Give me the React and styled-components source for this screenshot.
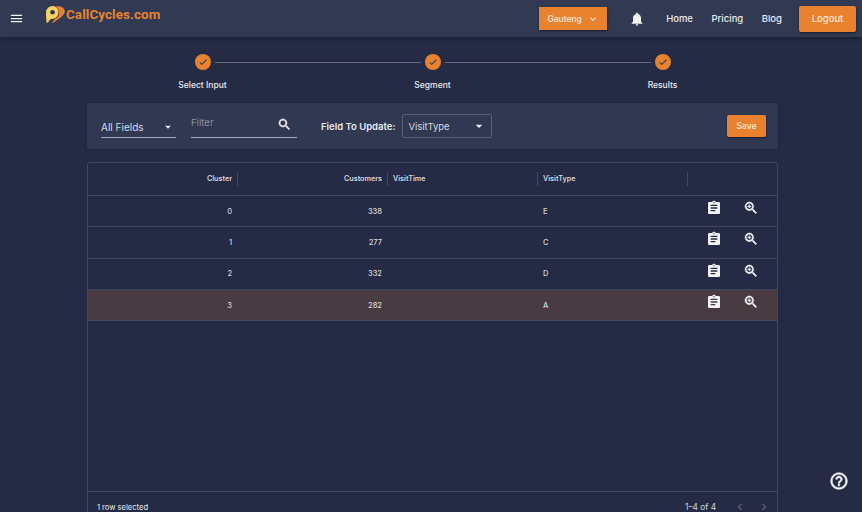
import React from 'react';
import styled, { createGlobalStyle } from 'styled-components';

const GlobalStyle = createGlobalStyle`
    html, body {
        margin: 0;
        height: 512px;
        overflow: hidden;
        background: #252b45;
        font-family: Inter, "Liberation Sans", sans-serif;
        color: #e8e9ee;
    }
    * {
        box-sizing: border-box;
    }
`;

const Page = styled.div`
    height: 512px;
    overflow: hidden;
`;

const Header = styled.header`
    height: 37px;
    display: flex;
    align-items: center;
    padding: 0 6px 0 9px;
    background: #313953;
    box-shadow: 0 2px 4px rgba(0, 0, 0, 0.25);
`;

const Brand = styled.div`
    display: flex;
    align-items: center;
    margin-left: 21px;
    margin-top: -8px;
`;

const BrandName = styled.span`
    font-family: Roboto, sans-serif;
    font-size: 13.4px;
    font-weight: 700;
    color: #e8822f;
    letter-spacing: 0.1px;
`;

const Spacer = styled.div`
    flex: 1;
`;

const RegionButton = styled.div`
    width: 68px;
    height: 23px;
    display: flex;
    align-items: center;
    justify-content: center;
    gap: 5px;
    background: #e8822f;
    color: #fbe9da;
    font-size: 8.5px;
    font-weight: 500;
    box-shadow: 0 1px 2px rgba(0, 0, 0, 0.5);
`;

const BellWrap = styled.div`
    display: flex;
    margin-left: 22px;
    margin-right: 21px;
`;

const NavLinks = styled.nav`
    display: flex;
    gap: 18.5px;
`;

const NavLink = styled.span`
    font-size: 9.5px;
    font-weight: 500;
    color: #e8e9ee;
`;

const LogoutButton = styled.div`
    width: 57px;
    height: 26px;
    margin-left: 17px;
    display: flex;
    align-items: center;
    justify-content: center;
    background: #e8822f;
    border-radius: 2px;
    color: #fbe9da;
    font-size: 9.5px;
    font-weight: 500;
    box-shadow: 0 1px 2px rgba(0, 0, 0, 0.5);
`;

const Content = styled.main`
    width: 691px;
    margin-left: 87px;
`;

const Stepper = styled.div`
    display: grid;
    grid-template-columns: repeat(3, 230px);
    padding: 17px 0 0 0.5px;
    height: 66px;
`;

const Step = styled.div`
    position: relative;
    display: flex;
    flex-direction: column;
    align-items: center;
`;

const StepCircle = styled.div`
    width: 16px;
    height: 16px;
    border-radius: 50%;
    background: #e8822f;
    display: flex;
    align-items: center;
    justify-content: center;
`;

const StepLine = styled.div`
    position: absolute;
    top: 8px;
    left: calc(50% + 12px);
    width: 206px;
    height: 1px;
    background: #63677a;
`;

const StepLabel = styled.span`
    margin-top: 9px;
    font-size: 8.5px;
    font-weight: 500;
    line-height: 12px;
    color: #e8e9ee;
`;

const Toolbar = styled.section`
    height: 46px;
    display: flex;
    align-items: center;
    padding: 0 12px 0 14px;
    background: #303852;
    border-radius: 3px;
    box-shadow: 0 1px 3px rgba(0, 0, 0, 0.2);
`;

const FieldSelect = styled.div`
    width: 75px;
    height: 21px;
    margin-top: 2px;
    display: flex;
    align-items: center;
    justify-content: space-between;
    padding-right: 1px;
    border-bottom: 1px solid #a6a9b5;
    font-size: 10px;
    color: #d9dae1;
`;

const FilterField = styled.div`
    width: 106px;
    height: 29px;
    margin-left: 15px;
    margin-top: -6px;
    display: flex;
    align-items: center;
    justify-content: space-between;
    padding: 0 5px 0 0;
    border-bottom: 1px solid #a6a9b5;
`;

const FilterPlaceholder = styled.span`
    font-size: 9.5px;
    color: #8e92a3;
    margin-top: -1px;
`;

const SearchIconWrap = styled.div`
    display: flex;
    margin-top: 4px;
`;

const UpdateLabel = styled.span`
    margin-left: 24px;
    font-size: 9.5px;
    font-weight: 600;
    color: #e8e9ee;
`;

const UpdateSelect = styled.div`
    width: 90px;
    height: 24px;
    margin-left: 7px;
    display: flex;
    align-items: center;
    justify-content: space-between;
    padding: 0 4px 0 5px;
    border: 1px solid #5b6175;
    border-radius: 2px;
    font-size: 9.5px;
    color: #d9dae1;
`;

const SaveButton = styled.div`
    width: 39px;
    height: 22px;
    margin-left: auto;
    display: flex;
    align-items: center;
    justify-content: center;
    background: #e8822f;
    border-radius: 2px;
    color: #fbe9da;
    font-size: 8.5px;
    font-weight: 500;
    box-shadow: 0 1px 2px rgba(0, 0, 0, 0.5);
`;

const Table = styled.section`
    margin-top: 13px;
    height: 362px;
    display: flex;
    flex-direction: column;
    border: 1px solid #42485e;
    border-radius: 3px;
`;

const Row = styled.div`
    display: grid;
    grid-template-columns: 150px 150px 150px 150px 1fr;
    align-items: center;
    height: ${props => props.$height}px;
    flex: none;
    border-bottom: 1px solid #42485e;
    background: ${props => (props.$selected ? '#483b41' : 'transparent')};
`;

const HeadCell = styled.div`
    position: relative;
    height: 100%;
    display: flex;
    align-items: center;
    justify-content: ${props => (props.$right ? 'flex-end' : 'flex-start')};
    padding: ${props => (props.$right ? '0 6px 1px 0' : '0 0 1px 5px')};
    font-size: 7.2px;
    font-weight: 600;
    color: #d5d6dd;

    &::after {
        content: '';
        position: absolute;
        right: 0;
        top: 9px;
        bottom: 9px;
        width: 1px;
        background: #42485e;
    }
`;

const Cell = styled.div`
    padding: ${props => (props.$right ? '0 6px 0 0' : '0 0 0 5px')};
    text-align: ${props => (props.$right ? 'right' : 'left')};
    font-size: 7.5px;
    font-weight: 500;
    color: #d5d6dd;
`;

const ActionCell = styled.div`
    display: flex;
    align-items: center;
    margin-top: -6px;
    padding-left: 18px;
    gap: 21px;
`;

const TableBody = styled.div`
    flex: 1;
    min-height: 0;
    display: flex;
    flex-direction: column;
`;

const Footer = styled.div`
    height: 32px;
    flex: none;
    display: flex;
    align-items: flex-start;
    padding: 11px 6px 0 9px;
    border-top: 1px solid #42485e;
`;

const SelectedCount = styled.span`
    font-size: 7.5px;
    line-height: 9px;
    font-weight: 500;
    color: #d5d6dd;
`;

const Pagination = styled.div`
    margin-left: auto;
    display: flex;
    align-items: center;
    gap: 17px;
    margin-top: -3px;
    font-size: 8.3px;
    line-height: 14px;
    color: #d5d6dd;
`;

const PagerArrows = styled.div`
    display: flex;
    gap: 10px;
`;

const HelpButton = styled.div`
    position: fixed;
    right: 13px;
    bottom: 21px;
    display: flex;
`;

const Icon = ({ d, size = 24, color = '#f4f4f6', bold = 0 }) => (
    <svg width={size} height={size} viewBox="0 0 24 24" fill={color} stroke={bold ? color : 'none'} strokeWidth={bold}>
        <path d={d} />
    </svg>
);

const icons = {
    menu: 'M3 18h18v-2H3v2zm0-5h18v-2H3v2zm0-7v2h18V6H3z',
    bell: 'M12 22c1.1 0 2-.9 2-2h-4c0 1.1.89 2 2 2zm6-6v-5c0-3.07-1.64-5.64-4.5-6.32V4c0-.83-.67-1.5-1.5-1.5s-1.5.67-1.5 1.5v.68C7.63 5.36 6 7.92 6 11v5l-2 2v1h16v-1l-2-2z',
    search: 'M15.5 14h-.79l-.28-.27C15.41 12.59 16 11.11 16 9.5 16 5.91 13.09 3 9.5 3S3 5.91 3 9.5 5.91 16 9.5 16c1.61 0 3.09-.59 4.23-1.57l.27.28v.79l5 4.99L20.49 19l-4.99-5zm-6 0C7.01 14 5 11.99 5 9.5S7.01 5 9.5 5 14 7.01 14 9.5 11.99 14 9.5 14z',
    zoom: 'M15.5 14h-.79l-.28-.27C15.41 12.59 16 11.11 16 9.5 16 5.91 13.09 3 9.5 3S3 5.91 3 9.5 5.91 16 9.5 16c1.61 0 3.09-.59 4.23-1.57l.27.28v.79l5 4.99L20.49 19l-4.99-5zm-6 0C7.01 14 5 11.99 5 9.5S7.01 5 9.5 5 14 7.01 14 9.5 11.99 14 9.5 14zm2.5-4h-2v2H9v-2H7V9h2V7h1v2h2v1z',
    clipboard: 'M19 3h-4.18C14.4 1.84 13.3 1 12 1c-1.3 0-2.4.84-2.82 2H5c-1.1 0-2 .9-2 2v14c0 1.1.9 2 2 2h14c1.1 0 2-.9 2-2V5c0-1.1-.9-2-2-2zm-7 0c.55 0 1 .45 1 1s-.45 1-1 1-1-.45-1-1 .45-1 1-1zm2 14H7v-2h7v2zm3-4H7v-2h10v2zm0-4H7V7h10v2z',
    help: 'M11 18h2v-2h-2v2zm1-16C6.48 2 2 6.48 2 12s4.48 10 10 10 10-4.48 10-10S17.52 2 12 2zm0 18c-4.41 0-8-3.59-8-8s3.59-8 8-8 8 3.59 8 8-3.59 8-8 8zm0-14c-2.21 0-4 1.79-4 4h2c0-1.1.9-2 2-2s2 .9 2 2c0 2-3 1.75-3 5h2c0-2.25 3-2.5 3-5 0-2.21-1.79-4-4-4z',
    dropdown: 'M7 10l5 5 5-5z',
    check: 'M9 16.17 4.83 12l-1.42 1.41L9 19 21 7l-1.41-1.41z',
    expand: 'M16.59 8.59 12 13.17 7.41 8.59 6 10l6 6 6-6z',
    prev: 'M15.41 7.41 14 6l-6 6 6 6 1.41-1.41L10.83 12z',
    next: 'M10 6 8.59 7.41 13.17 12l-4.58 4.59L10 18l6-6z',
};

const Logo = () => (
    <svg width="21" height="20" viewBox="0 0 21 20">
        <path d="M11 1.5c3.6-1 7.6.6 8.5 3.4 1 3-1.5 5.8-4 7.6L8 18c-.5.4-1 0-.7-.5l2.6-3.8c2.8-.8 4.6-3.4 4.3-6.2-.2-2.6-1.4-4.4-3.2-6z" fill="#e8822f" />
        <path d="M8 1C4 1 1 3.9 1 7.6c0 3 .2 6.2.5 9.4.1.9.8 1.1 1.3.5l3-3.4c4 .2 7.6-2.6 7.7-6.5C13.600 4 11.400 1 8 1z" fill="#f6d25f" />
        <circle cx="7.500" cy="7.300" r="2.300" fill="#2b3350" />
    </svg>
);

const steps = ['Select Input', 'Segment', 'Results'];

const rows = [
    { cluster: 0, customers: 338, visitType: 'E' },
    { cluster: 1, customers: 277, visitType: 'C' },
    { cluster: 2, customers: 332, visitType: 'D' },
    { cluster: 3, customers: 282, visitType: 'A', selected: true },
];

const App = () => {
    return (
        <Page>
            <GlobalStyle />
            <Header>
                <Icon d={icons.menu} size={15} />
                <Brand>
                    <Logo />
                    <BrandName>CallCycles.com</BrandName>
                </Brand>
                <Spacer />
                <RegionButton>
                    Gauteng
                    <Icon d={icons.expand} size={12} color="#fbe9da" />
                </RegionButton>
                <BellWrap>
                    <Icon d={icons.bell} size={16} />
                </BellWrap>
                <NavLinks>
                    <NavLink>Home</NavLink>
                    <NavLink>Pricing</NavLink>
                    <NavLink>Blog</NavLink>
                </NavLinks>
                <LogoutButton>Logout</LogoutButton>
            </Header>

            <Content>
                <Stepper>
                    {steps.map((label, i) => (
                        <Step key={label}>
                            <StepCircle>
                                <Icon d={icons.check} size={10} color="#252b45" />
                            </StepCircle>
                            {i < steps.length - 1 && <StepLine />}
                            <StepLabel>{label}</StepLabel>
                        </Step>
                    ))}
                </Stepper>

                <Toolbar>
                    <FieldSelect>
                        All Fields
                        <Icon d={icons.dropdown} size={14} />
                    </FieldSelect>
                    <FilterField>
                        <FilterPlaceholder>Filter</FilterPlaceholder>
                        <SearchIconWrap>
                            <Icon d={icons.search} size={15} bold={0.7} />
                        </SearchIconWrap>
                    </FilterField>
                    <UpdateLabel>Field To Update:</UpdateLabel>
                    <UpdateSelect>
                        VisitType
                        <Icon d={icons.dropdown} size={16} />
                    </UpdateSelect>
                    <SaveButton>Save</SaveButton>
                </Toolbar>

                <Table>
                    <Row $height={33}>
                        <HeadCell $right>Cluster</HeadCell>
                        <HeadCell $right>Customers</HeadCell>
                        <HeadCell>VisitTime</HeadCell>
                        <HeadCell>VisitType</HeadCell>
                        <div />
                    </Row>
                    <TableBody>
                        {rows.map(row => (
                            <Row key={row.cluster} $height={31.3} $selected={row.selected}>
                                <Cell $right>{row.cluster}</Cell>
                                <Cell $right>{row.customers}</Cell>
                                <Cell />
                                <Cell>{row.visitType}</Cell>
                                <ActionCell>
                                    <Icon d={icons.clipboard} size={16} />
                                    <Icon d={icons.zoom} size={16} bold={0.7} />
                                </ActionCell>
                            </Row>
                        ))}
                    </TableBody>
                    <Footer>
                        <SelectedCount>1 row selected</SelectedCount>
                        <Pagination>
                            1–4 of 4
                            <PagerArrows>
                                <Icon d={icons.prev} size={14} color="#62677c" />
                                <Icon d={icons.next} size={14} color="#62677c" />
                            </PagerArrows>
                        </Pagination>
                    </Footer>
                </Table>
            </Content>

            <HelpButton>
                <Icon d={icons.help} size={20} bold={0.6} />
            </HelpButton>
        </Page>
    );
};

export default App;
